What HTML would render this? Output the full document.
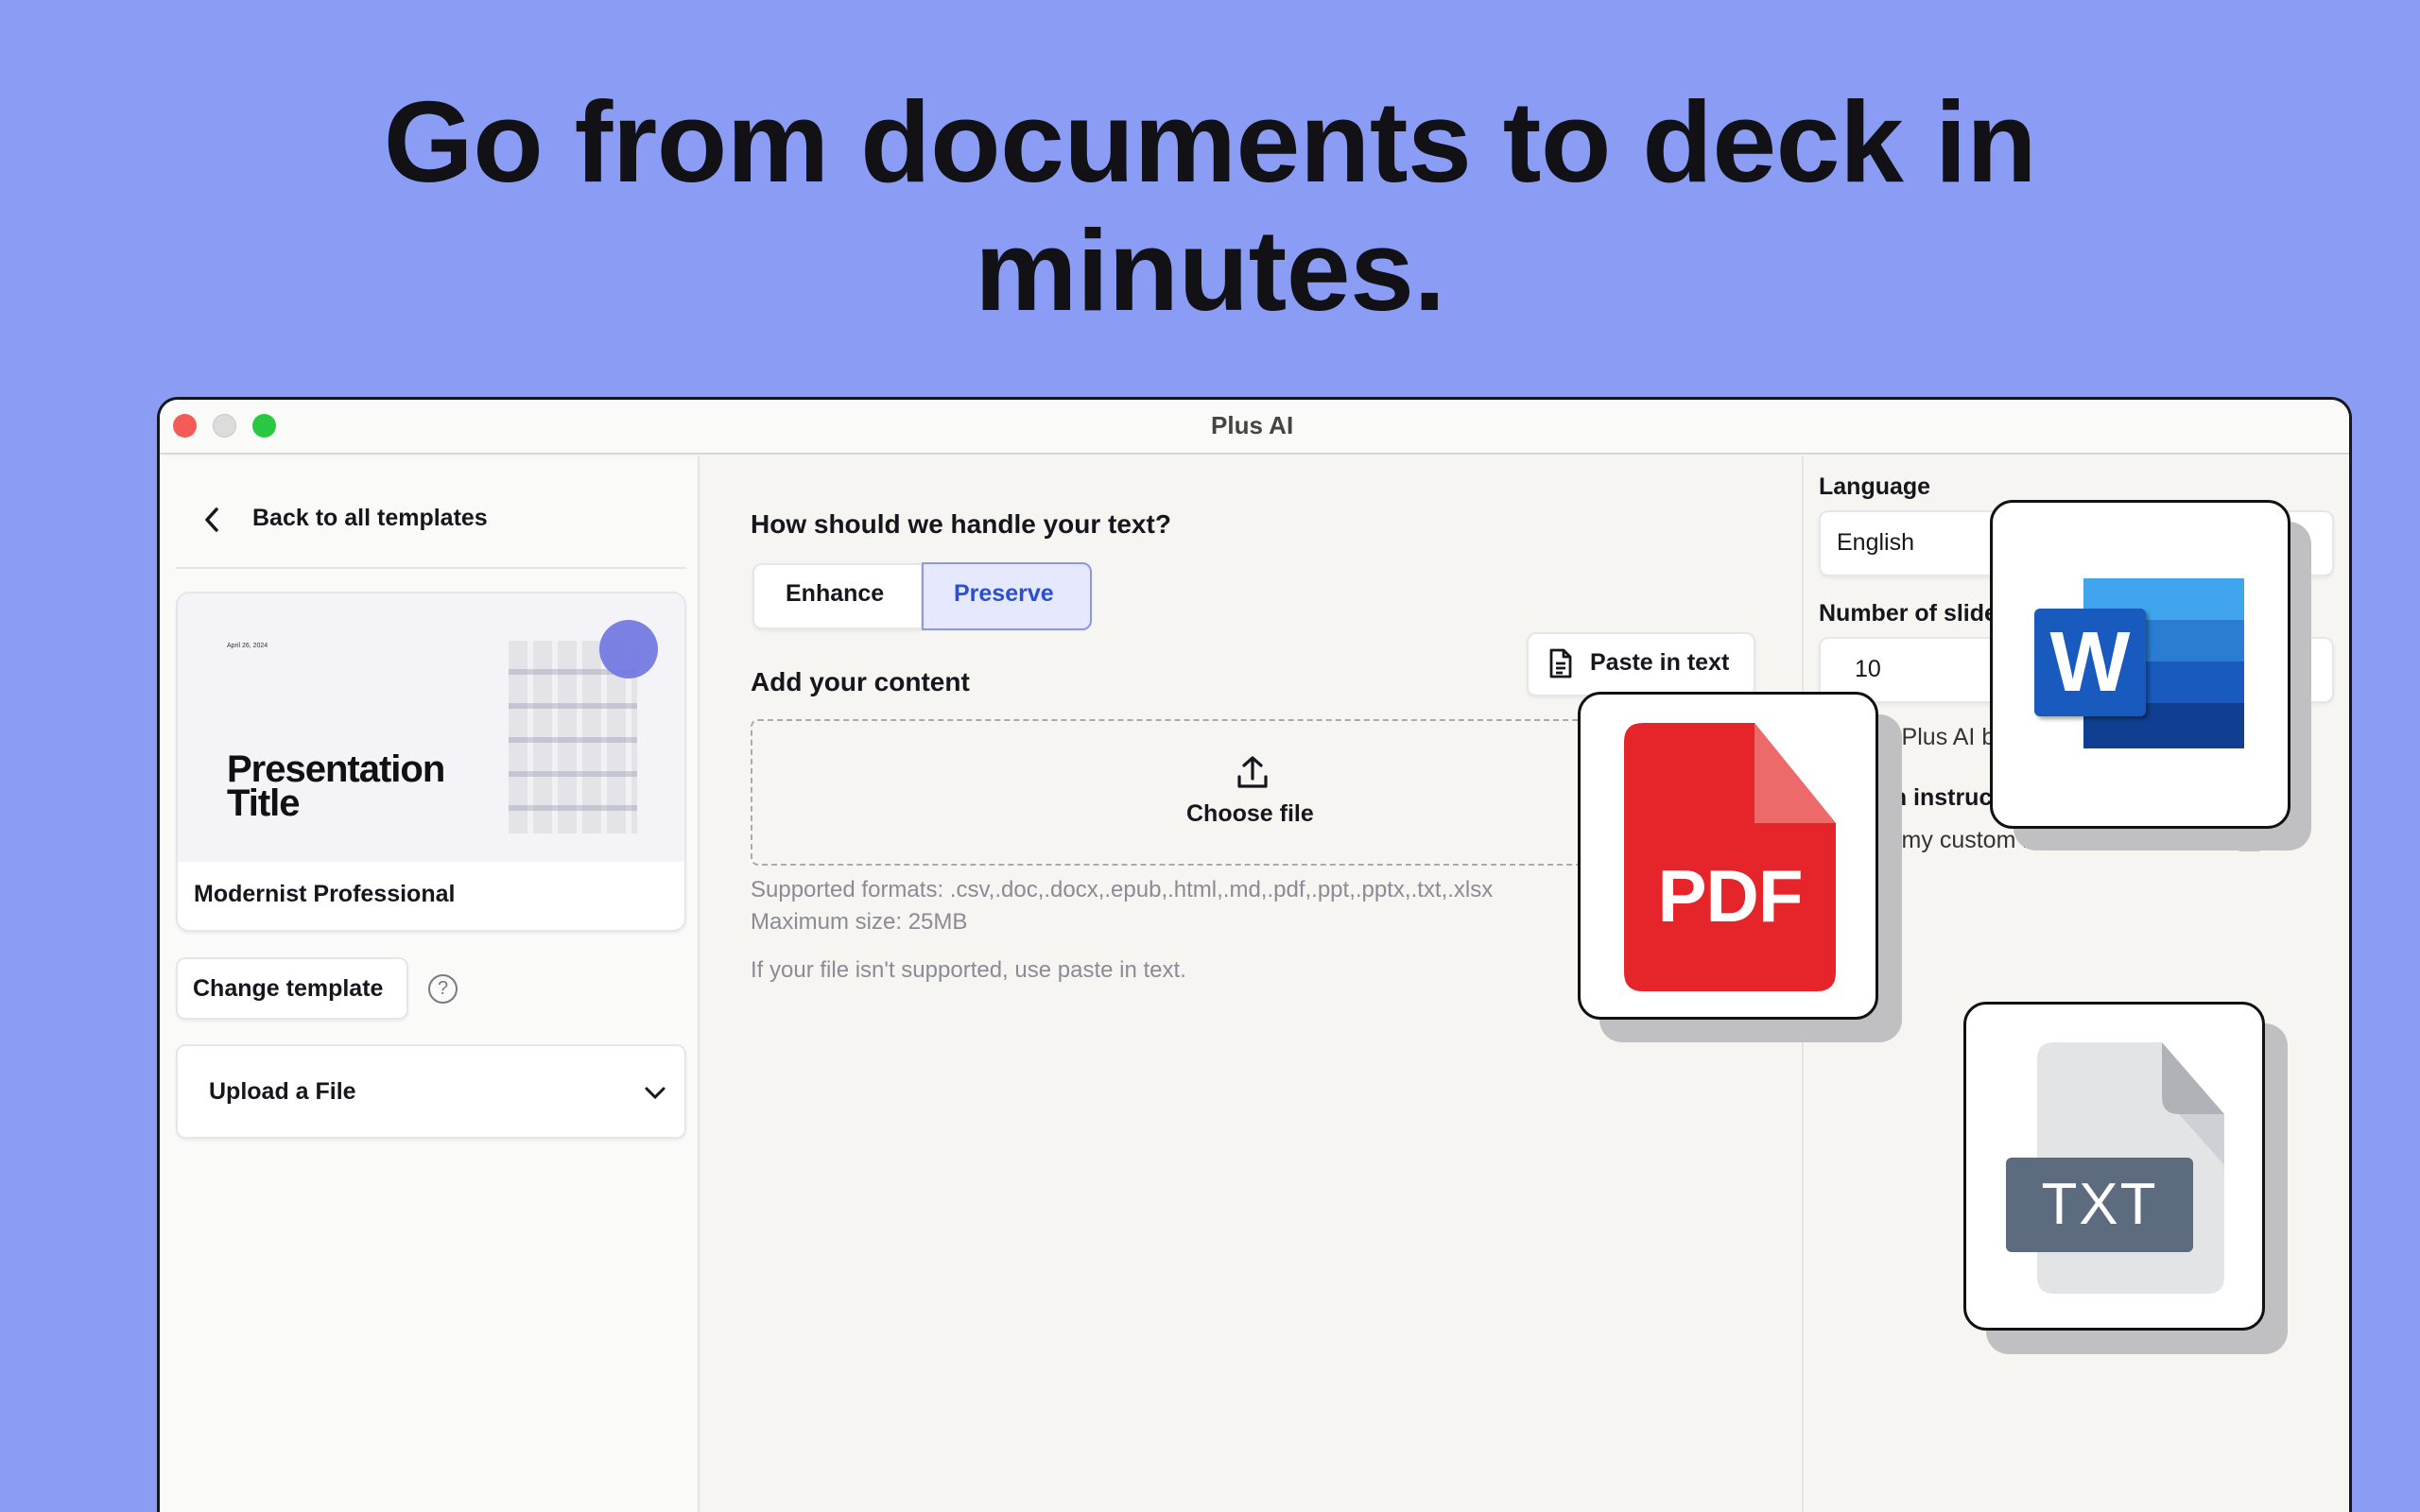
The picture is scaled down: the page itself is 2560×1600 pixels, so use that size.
<!DOCTYPE html>
<html style="overflow:hidden;width:2560px;height:1600px"><head><meta charset="utf-8"><style>
*{margin:0;padding:0;box-sizing:border-box}
body{width:2560px;height:1600px;background:#8b9cf5;font-family:"Liberation Sans",sans-serif;position:relative;overflow:hidden;color:#16161d}
.a{position:absolute}
h1{position:absolute;left:0;width:2560px;text-align:center;font-size:122px;font-weight:900;letter-spacing:-0.5px;line-height:136px;color:#111116;top:82px}
.win{left:166px;top:420px;width:2322px;height:1180px;background:#f6f5f2;border:3px solid #18181c;border-bottom:none;border-radius:22px 22px 0 0;overflow:hidden}
.t{font-size:25px;white-space:nowrap}
.b{font-weight:bold}
.btn{background:#fff;border:2px solid #e6e6ea;border-radius:10px;box-shadow:0 2px 3px rgba(0,0,0,.06)}
.card{background:#fff;border:3px solid #111;border-radius:24px}
.sh{background:#c0bfc2;border-radius:24px}
.g{color:#8b8b95;font-size:24px}
</style></head><body>
<h1>Go from documents to deck in<br>minutes.</h1>
<div class="a win">
  <div class="a" style="left:0;top:0;width:2322px;height:58px;background:#fafaf9;border-bottom:2px solid #d8d8d8"></div>
  <div class="a" style="left:14px;top:15px;width:25px;height:25px;border-radius:50%;background:#f45b57"></div>
  <div class="a" style="left:56px;top:15px;width:25px;height:25px;border-radius:50%;background:#dcdcdc;border:1px solid #c8c8c8"></div>
  <div class="a" style="left:98px;top:15px;width:25px;height:25px;border-radius:50%;background:#2ac840"></div>
  <div class="a t b" style="left:1112px;top:12px;color:#444;font-size:26px">Plus AI</div>
  <div class="a" style="left:0;top:60px;width:571px;height:1120px;background:#fafaf9;border-right:2px solid #e6e5e2"></div>
  <svg class="a" style="left:44px;top:112px" width="24" height="30" viewBox="0 0 24 30"><path d="M16 4 L6 15 L16 26" stroke="#16161d" stroke-width="3.5" fill="none" stroke-linecap="round" stroke-linejoin="round"/></svg>
  <div class="a t" style="left:98px;top:111px;font-weight:600">Back to all templates</div>
  <div class="a" style="left:17px;top:177px;width:540px;height:2px;background:#e6e5e2"></div>
  <div class="a btn" style="left:17px;top:203px;width:540px;height:360px;border-radius:14px;overflow:hidden">
    <div class="a" style="left:0;top:0;width:540px;height:284px;background:#f3f3f8"></div>
    <div class="a" style="left:52px;top:52px;font-size:7px;color:#333">April 26, 2024</div>
    <div class="a" style="left:52px;top:168px;font-size:40px;font-weight:900;line-height:36px;letter-spacing:-1px;color:#111">Presentation<br>Title</div>
    <div class="a" style="left:350px;top:50px;width:136px;height:204px;background:repeating-linear-gradient(90deg,#e4e4e8 0 20px,#f2f2f4 20px 26px),#eee"></div>
    <div class="a" style="left:350px;top:50px;width:136px;height:204px;background:repeating-linear-gradient(180deg,transparent 0 30px,rgba(140,140,170,.35) 30px 36px)"></div>
    <div class="a" style="left:446px;top:28px;width:62px;height:62px;border-radius:50%;background:#7479e2;opacity:.95"></div>
    <div class="a t b" style="left:17px;top:304px;font-weight:600">Modernist Professional</div>
  </div>
  <div class="a btn t" style="left:17px;top:590px;width:246px;height:66px;padding:17px 0 0 16px;font-weight:600">Change template</div>
  <div class="a" style="left:284px;top:608px;width:31px;height:31px;border-radius:50%;border:2.5px solid #7a7a85;color:#7a7a85;font-size:20px;text-align:center;line-height:26px">?</div>
  <div class="a btn" style="left:17px;top:682px;width:540px;height:100px">
    <div class="a t" style="left:33px;top:34px;font-weight:600">Upload a File</div>
    <svg class="a" style="left:492px;top:40px" width="26" height="20" viewBox="0 0 26 20"><path d="M4 5 L13 14 L22 5" stroke="#16161d" stroke-width="3" fill="none" stroke-linecap="round"/></svg>
  </div>
  <div class="a t" style="left:625px;top:116px;font-size:28px;font-weight:600">How should we handle your text?</div>
  <div class="a btn" style="left:627px;top:173px;width:180px;height:70px;border-radius:10px 0 0 10px"></div>
  <div class="a t" style="left:662px;top:191px;font-weight:600">Enhance</div>
  <div class="a" style="left:806px;top:172px;width:180px;height:72px;background:#e6e8fd;border:2px solid #8a96f0;border-radius:0 10px 10px 0"></div>
  <div class="a t" style="left:840px;top:191px;color:#2a4fd0;font-weight:600">Preserve</div>
  <div class="a t" style="left:625px;top:283px;font-size:28px;font-weight:600">Add your content</div>
  <div class="a btn" style="left:1446px;top:246px;width:242px;height:68px"></div>
  <svg class="a" style="left:1468px;top:262px" width="28" height="34" viewBox="0 0 28 34"><path d="M4 3 H17 L24 10 V31 H4 Z M17 3 V10 H24 M9 17 H19 M9 22 H19 M9 27 H16" stroke="#16161d" stroke-width="2.8" fill="none" stroke-linejoin="round"/></svg>
  <div class="a t" style="left:1513px;top:264px;font-weight:600">Paste in text</div>
  <div class="a" style="left:625px;top:338px;width:1062px;height:155px;border:2px dashed #a9a9b0;border-radius:8px"></div>
  <svg class="a" style="left:1136px;top:375px" width="40" height="40" viewBox="0 0 40 40"><path d="M20 4 V26 M11 12 L20 4 L29 12 M6 24 V34 H34 V24" stroke="#16161d" stroke-width="3.2" fill="none" stroke-linecap="round" stroke-linejoin="round"/></svg>
  <div class="a t" style="left:1086px;top:424px;font-weight:600">Choose file</div>
  <div class="a g" style="left:625px;top:505px">Supported formats: .csv,.doc,.docx,.epub,.html,.md,.pdf,.ppt,.pptx,.txt,.xlsx</div>
  <div class="a g" style="left:625px;top:539px">Maximum size: 25MB</div>
  <div class="a g" style="left:625px;top:590px">If your file isn't supported, use paste in text.</div>
  <div class="a" style="left:1737px;top:60px;width:2px;height:1120px;background:#e6e5e2"></div>
  <div class="a t" style="left:1755px;top:78px;font-weight:600">Language</div>
  <div class="a btn" style="left:1755px;top:117px;width:545px;height:70px"></div>
  <div class="a t" style="left:1774px;top:137px;font-weight:500">English</div>
  <div class="a t" style="left:1755px;top:212px;font-weight:600">Number of slides</div>
  <div class="a btn" style="left:1755px;top:251px;width:545px;height:70px"></div>
  <div class="a t" style="left:1793px;top:271px;font-weight:500">10</div>
  <div class="a t" style="left:1755px;top:343px;color:#333">Include Plus AI branding</div>
  <div class="a t b" style="left:1755px;top:407px">Custom instructions</div>
  <div class="a t" style="left:1755px;top:452px;color:#333">Include my custom instructions</div>
  <svg class="a" style="left:2196px;top:450px" width="30" height="30" viewBox="0 0 30 30"><path d="M14 5 H4 V26 H25 V16 M11 19 L12 14 L23 3 L27 7 L16 18 Z" stroke="#333" stroke-width="2.5" fill="none" stroke-linejoin="round"/></svg>
</div>
<div class="a sh" style="left:2130px;top:552px;width:315px;height:348px"></div>
<div class="a card" style="left:2105px;top:529px;width:318px;height:348px">
  <div class="a" style="left:96px;top:80px;width:170px;height:44px;background:#41a5ee"></div>
  <div class="a" style="left:96px;top:124px;width:170px;height:44px;background:#2b7cd3"></div>
  <div class="a" style="left:96px;top:168px;width:170px;height:44px;background:#185abd"></div>
  <div class="a" style="left:96px;top:212px;width:170px;height:48px;background:#103f91"></div>
  <div class="a" style="left:44px;top:112px;width:118px;height:114px;background:#185abd;border-radius:6px;box-shadow:3px 3px 4px rgba(0,0,0,.35);color:#fff;font-size:90px;font-weight:bold;text-align:center;line-height:114px">W</div>
</div>
<div class="a sh" style="left:1692px;top:756px;width:320px;height:347px"></div>
<div class="a card" style="left:1669px;top:732px;width:318px;height:347px">
  <svg class="a" style="left:46px;top:30px" width="224" height="284" viewBox="0 0 224 284"><path d="M0 20 Q0 0 20 0 H138 L224 106 V264 Q224 284 204 284 H20 Q0 284 0 264 Z" fill="#e5252a"/><path d="M138 0 L224 106 H138 Z" fill="#ed6a6b"/></svg>
  <div class="a" style="left:46px;top:168px;width:224px;text-align:center;color:#fff;font-size:78px;font-weight:bold;letter-spacing:-1px">PDF</div>
</div>
<div class="a sh" style="left:2101px;top:1083px;width:319px;height:350px"></div>
<div class="a card" style="left:2077px;top:1060px;width:319px;height:348px">
  <svg class="a" style="left:75px;top:40px" width="200" height="266" viewBox="0 0 200 266"><path d="M0 18 Q0 0 18 0 H132 L198 76 V248 Q198 266 180 266 H18 Q0 266 0 248 Z" fill="#e3e4e6"/><path d="M132 0 L198 76 H150 Q132 76 132 58 Z" fill="#b0b2b8"/><path d="M150 76 H198 V130 Z" fill="#cfd0d5"/></svg>
  <div class="a" style="left:42px;top:162px;width:198px;height:100px;background:#5c6c7e;border-radius:6px;color:#fff;font-size:62px;text-align:center;line-height:100px;letter-spacing:2px">TXT</div>
</div>
</body></html>
